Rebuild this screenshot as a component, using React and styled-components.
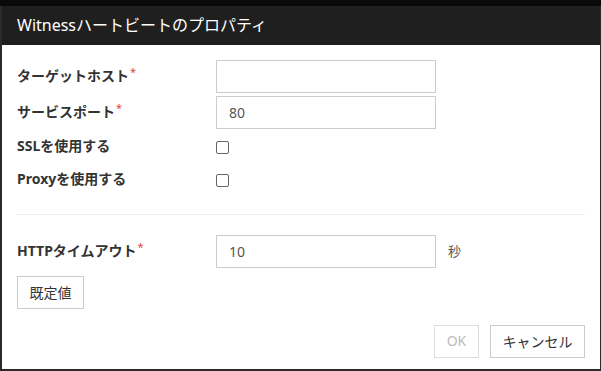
import React from "react";
import styled, { createGlobalStyle } from "styled-components";

const GlobalStyle = createGlobalStyle`
  html, body {
    margin: 0;
    padding: 0;
    background: #2a2a2a;
  }
  body {
    font-family: "Noto Sans", "Noto Sans CJK JP", sans-serif;
  }
`;

const Page = styled.div`
  width: 601px;
  height: 371px;
  box-sizing: border-box;
  padding: 6px 1px 2px 2px;
  background: linear-gradient(#0a0a0a 0, #0a0a0a 6px, #2a2a2a 6px);
`;

const Dialog = styled.div`
  width: 598px;
  height: 363px;
  background: #fff;
  display: flex;
  flex-direction: column;
`;

const Header = styled.div`
  height: 39px;
  box-sizing: border-box;
  padding: 0 0 3px 15px;
  background: #1f1f1f;
  color: #fff;
  display: flex;
  align-items: center;
  font-size: 16px;
`;

const Body = styled.div`
  flex: 1;
  padding: 15px 15px 0 15px;
  display: flex;
  flex-direction: column;
`;

const Row = styled.div`
  display: flex;
  align-items: center;
  height: 33px;
  margin-top: ${(p) => p.$gap || 0}px;
`;

const Label = styled.div`
  width: 199px;
  flex-shrink: 0;
  padding-bottom: 5px;
  font-size: 14px;
  font-weight: bold;
  color: #333;
`;

const Req = styled.span`
  color: #e0443e;
  font-size: 11px;
  font-weight: normal;
  vertical-align: 5px;
  margin-left: 1px;
`;

const Input = styled.input`
  width: 220px;
  height: 33px;
  box-sizing: border-box;
  border: 1px solid #ccc;
  padding: 0 12px;
  font-family: inherit;
  font-size: 14px;
  color: #555;
  outline: none;
`;

const Check = styled.span`
  width: 11px;
  height: 11px;
  margin-bottom: 1px;
  border: 1px solid #666;
  border-radius: 2px;
  background: #fff;
`;

const Unit = styled.span`
  margin-left: 12px;
  padding-bottom: 2px;
  font-size: 13px;
  color: #555;
`;

const Divider = styled.div`
  height: 1px;
  background: #eee;
  margin: 17px 0 20px 0;
`;

const Button = styled.button`
  height: 33px;
  box-sizing: border-box;
  border: 1px solid ${(p) => (p.disabled ? "#ddd" : "#ccc")};
  background: #fff;
  padding: 0 0 2px 0;
  width: ${(p) => p.$w}px;
  font-family: inherit;
  font-size: 14px;
  color: ${(p) => (p.disabled ? "#bbb" : "#333")};
`;

const DefaultRow = styled.div`
  margin-top: 8px;
`;

const Footer = styled.div`
  display: flex;
  justify-content: flex-end;
  gap: 11px;
  margin-top: 16px;
`;

export default function App() {
  return (
    <>
      <GlobalStyle />
      <Page>
        <Dialog>
          <Header>Witnessハートビートのプロパティ</Header>
          <Body>
            <Row>
              <Label>
                ターゲットホスト<Req>*</Req>
              </Label>
              <Input defaultValue="" />
            </Row>
            <Row $gap={3}>
              <Label>
                サービスポート<Req>*</Req>
              </Label>
              <Input defaultValue="80" />
            </Row>
            <Row $gap={2}>
              <Label>SSLを使用する</Label>
              <Check />
            </Row>
            <Row>
              <Label>Proxyを使用する</Label>
              <Check />
            </Row>
            <Divider />
            <Row>
              <Label>
                HTTPタイムアウト<Req>*</Req>
              </Label>
              <Input defaultValue="10" />
              <Unit>秒</Unit>
            </Row>
            <DefaultRow>
              <Button $w={67}>既定値</Button>
            </DefaultRow>
            <Footer>
              <Button $w={45} disabled>
                OK
              </Button>
              <Button $w={95}>キャンセル</Button>
            </Footer>
          </Body>
        </Dialog>
      </Page>
    </>
  );
}
